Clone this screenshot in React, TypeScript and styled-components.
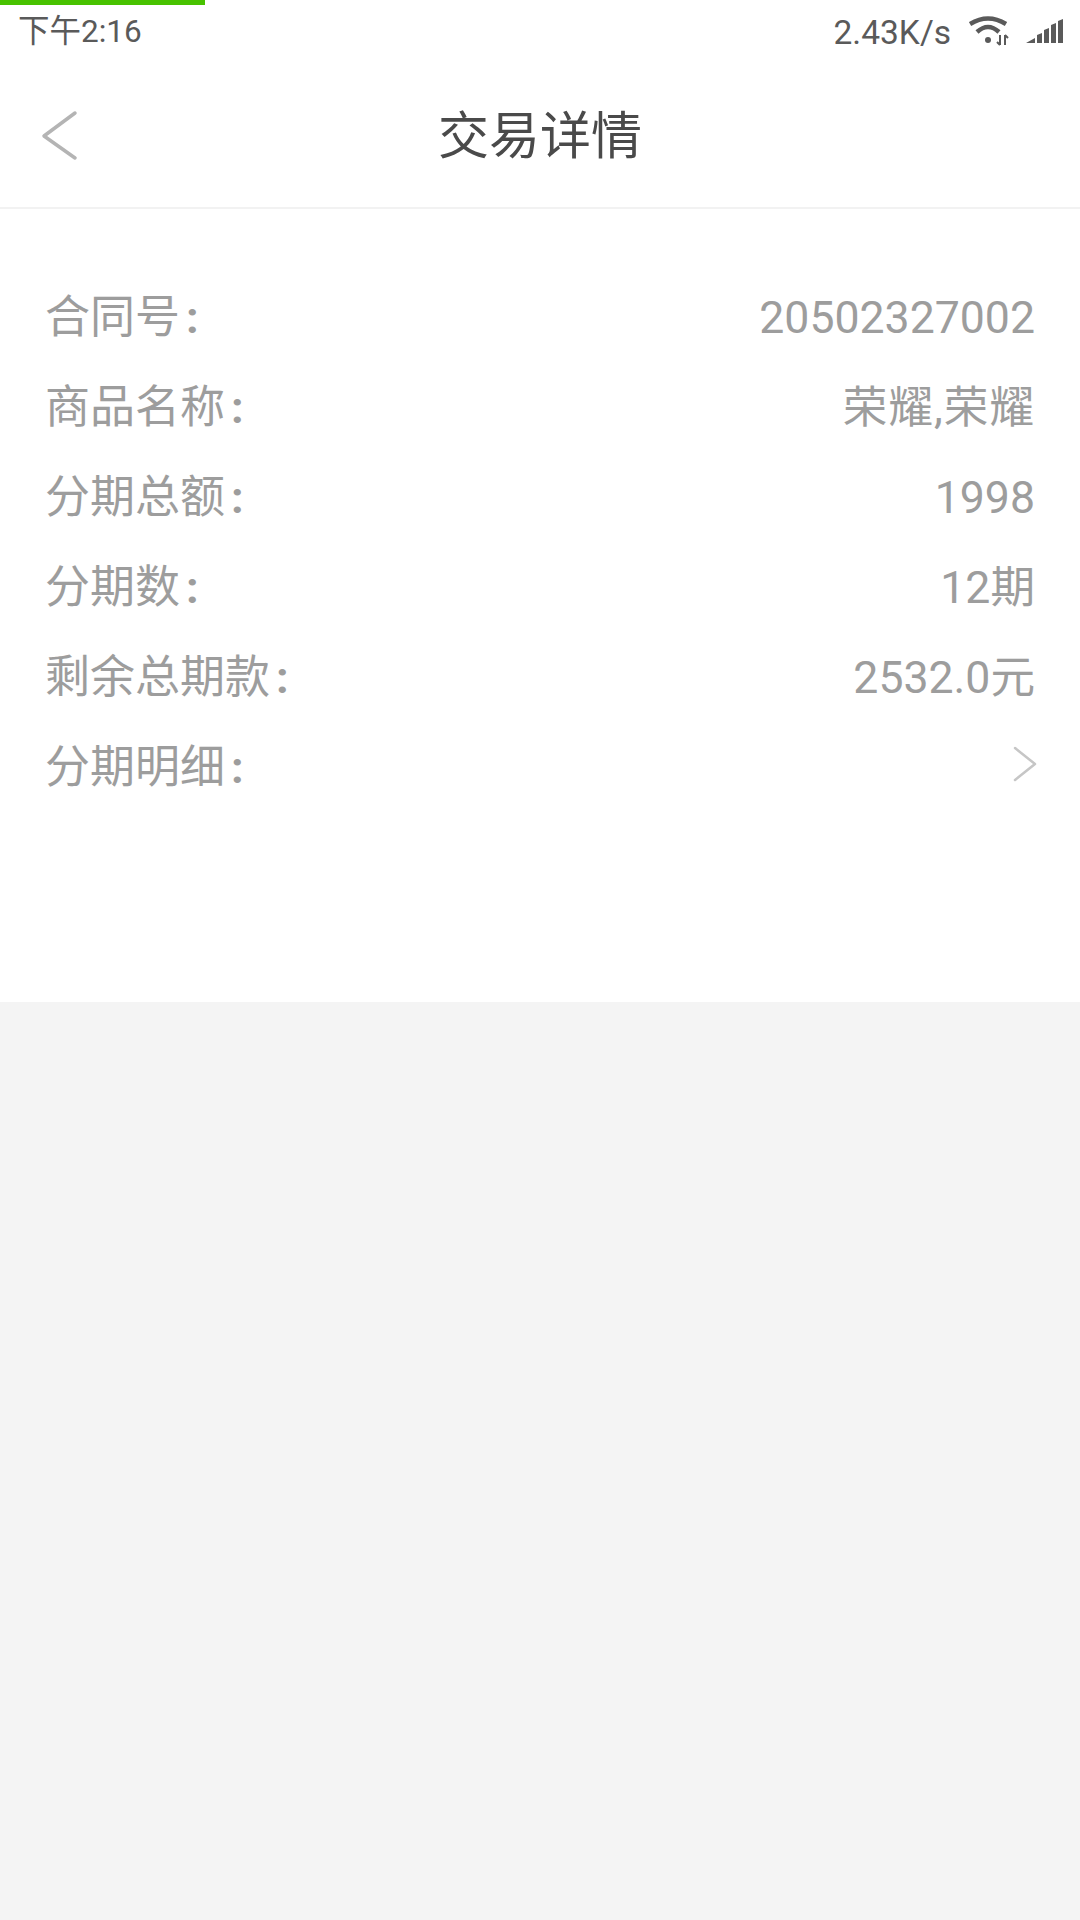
import React from 'react';
import styled, { createGlobalStyle } from 'styled-components';

const GlobalStyle = createGlobalStyle`
  html, body {
    margin: 0;
    padding: 0;
    background: #f4f4f4;
  }
  * {
    box-sizing: border-box;
  }
`;

const Page = styled.div`
  width: 1080px;
  height: 1920px;
  position: relative;
  background: #f4f4f4;
  font-family: Roboto, "Noto Sans CJK SC", sans-serif;
`;

const LoadingBar = styled.div`
  position: absolute;
  top: 0;
  left: 0;
  width: 205px;
  height: 5px;
  background: #48c200;
`;

const StatusBar = styled.div`
  height: 60px;
  padding: 4px 16px 0 18px;
  display: flex;
  align-items: center;
  justify-content: space-between;
  background: #fff;
  color: #5a5a5a;
`;

const Time = styled.span`
  font-size: 31.5px;
  line-height: 56px;
`;

const StatusRight = styled.div`
  display: flex;
  align-items: center;
`;

const Speed = styled.span`
  font-size: 33.5px;
  margin-right: 18px;
`;

const WifiIcon = styled.svg`
  margin: 0 16px 2px 0;
`;

const NavBar = styled.div`
  height: 149px;
  padding-bottom: 3px;
  background: #fff;
  border-bottom: 2px solid #f2f2f2;
  display: flex;
  align-items: center;
  justify-content: center;
  position: relative;
`;

const BackButton = styled.svg`
  position: absolute;
  left: 40px;
  top: 50px;
`;

const Title = styled.h1`
  margin: 0;
  font-size: 51px;
  font-weight: 400;
  color: #4a4a4a;
`;

const Detail = styled.div`
  height: 793px;
  padding: 64px 45px 0 45px;
  background: #fff;
`;

const Row = styled.div`
  height: 90px;
  display: flex;
  align-items: center;
  justify-content: space-between;
  font-size: 45px;
  line-height: 60px;
  color: #9d9d9d;
`;

const Value = styled.span<{ $tracking?: number }>`
  font-size: 44.6px;
  letter-spacing: ${(p) => p.$tracking || 0}px;
`;

const Colon = styled.span`
  display: inline-block;
  margin-left: 6px;
  font-weight: 700;
`;

const Chevron = styled.svg`
  margin: 0 -2px 8px 0;
`;

const rows: { label: string; value: string; tracking?: number }[] = [
  { label: '合同号', value: '20502327002' },
  { label: '商品名称', value: '荣耀,荣耀', tracking: 1 },
  { label: '分期总额', value: '1998' },
  { label: '分期数', value: '12期' },
  { label: '剩余总期款', value: '2532.0元' },
];

const App: React.FC = () => {
  return (
    <Page>
      <GlobalStyle />
      <LoadingBar />
      <StatusBar>
        <Time>下午2:16</Time>
        <StatusRight>
          <Speed>2.43K/s</Speed>
          <WifiIcon width="41" height="30" viewBox="0 0 41 30">
            <path d="M1 8 Q19 -3 37 8" fill="none" stroke="#5a5a5a" strokeWidth="4.5" />
            <path d="M8 16 Q19 6 30 16" fill="none" stroke="#5a5a5a" strokeWidth="4.5" />
            <circle cx="19" cy="24" r="3" fill="#5a5a5a" />
            <path d="M31 19v10M28 26l3 3M36 19v10M36 19l3 3" fill="none" stroke="#5a5a5a" strokeWidth="2" />
          </WifiIcon>
          <svg width="38" height="26" viewBox="0 0 38 26">
            <path d="M0 24 L9 19 V24 Z M11 16 L16 14 V24 H11 Z M18 11 L23 9 V24 H18 Z M25 6 L30 4 V24 H25 Z M32 2 L37 0 V24 H32 Z" fill="#5a5a5a" />
          </svg>
        </StatusRight>
      </StatusBar>
      <NavBar>
        <BackButton width="40" height="52" viewBox="0 0 40 52">
          <path d="M35 3 L4 26 L35 48" fill="none" stroke="#b4b4b4" strokeWidth="3.5" strokeLinecap="round" strokeLinejoin="round" />
        </BackButton>
        <Title>交易详情</Title>
      </NavBar>
      <Detail>
        {rows.map((row) => (
          <Row key={row.label}>
            <span>
              {row.label}
              <Colon>:</Colon>
            </span>
            <Value $tracking={row.tracking}>{row.value}</Value>
          </Row>
        ))}
        <Row>
          <span>
            分期明细
            <Colon>:</Colon>
          </span>
          <Chevron width="24" height="36" viewBox="0 0 24 36">
            <path d="M2 2 L22 18 L2 34" fill="none" stroke="#c6c6c6" strokeWidth="2.5" strokeLinecap="round" strokeLinejoin="round" />
          </Chevron>
        </Row>
      </Detail>
    </Page>
  );
};

export default App;
